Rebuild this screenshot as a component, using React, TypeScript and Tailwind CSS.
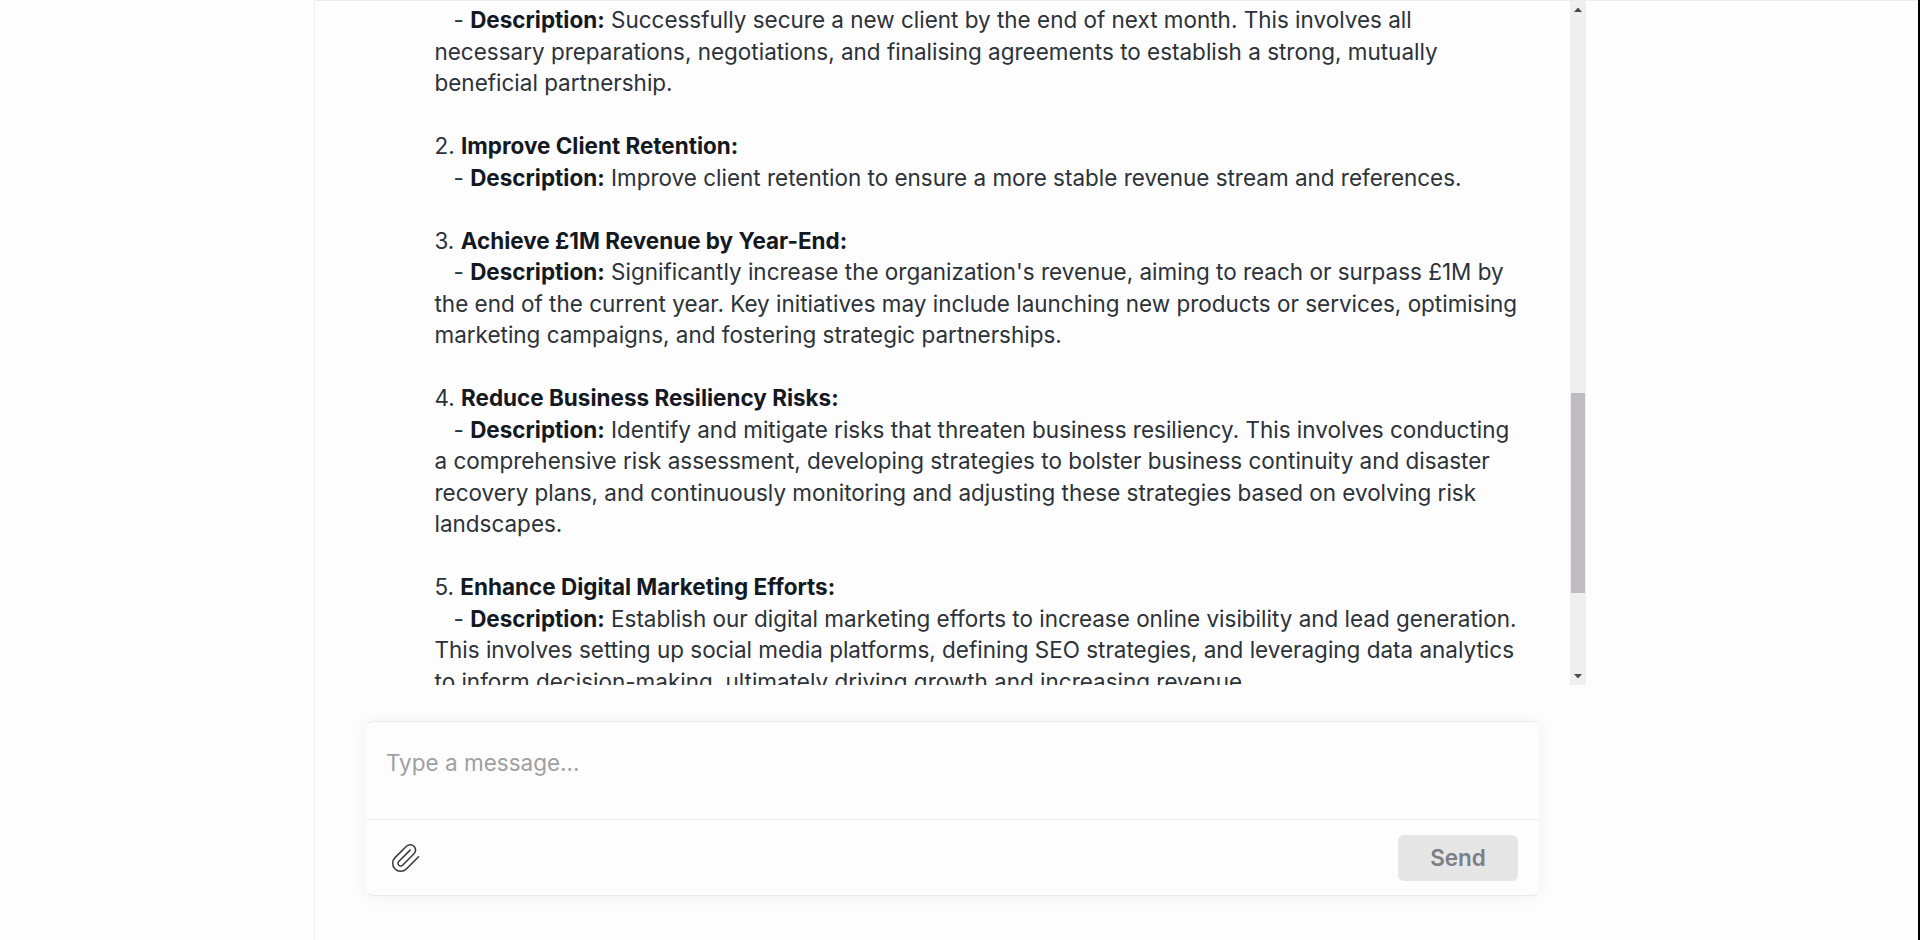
import React from "react";

const messageLines = [
  { lead: "   - ", bold: "Description:", text: " Successfully secure a new client by the end of next month. This involves all" },
  { text: "necessary preparations, negotiations, and finalising agreements to establish a strong, mutually" },
  { text: "beneficial partnership." },
  { text: "" },
  { lead: "2. ", bold: "Improve Client Retention:" },
  { lead: "   - ", bold: "Description:", text: " Improve client retention to ensure a more stable revenue stream and references." },
  { text: "" },
  { lead: "3. ", bold: "Achieve £1M Revenue by Year-End:" },
  { lead: "   - ", bold: "Description:", text: " Significantly increase the organization's revenue, aiming to reach or surpass £1M by" },
  { text: "the end of the current year. Key initiatives may include launching new products or services, optimising" },
  { text: "marketing campaigns, and fostering strategic partnerships." },
  { text: "" },
  { lead: "4. ", bold: "Reduce Business Resiliency Risks:" },
  { lead: "   - ", bold: "Description:", text: " Identify and mitigate risks that threaten business resiliency. This involves conducting" },
  { text: "a comprehensive risk assessment, developing strategies to bolster business continuity and disaster" },
  { text: "recovery plans, and continuously monitoring and adjusting these strategies based on evolving risk" },
  { text: "landscapes." },
  { text: "" },
  { lead: "5. ", bold: "Enhance Digital Marketing Efforts:" },
  { lead: "   - ", bold: "Description:", text: " Establish our digital marketing efforts to increase online visibility and lead generation." },
  { text: "This involves setting up social media platforms, defining SEO strategies, and leveraging data analytics" },
  { text: "to inform decision-making, ultimately driving growth and increasing revenue." },
];

const Scrollbar = () => (
  <div className="w-4 shrink-0 bg-[#efeff0] flex flex-col items-center justify-between pt-[7px] pb-[7px]">
    <svg width="8" height="4" viewBox="0 0 8 4" className="shrink-0">
      <path d="M0 4 L3.5 0 H4.5 L8 4 Z" fill="#4a4a50" />
    </svg>
    <div className="w-3.5 h-[200px] mt-[381px] bg-[#bebcc2]" />
    <svg width="8" height="4" viewBox="0 0 8 4" className="shrink-0 mt-auto">
      <path d="M0 0 L3.5 4 H4.5 L8 0 Z" fill="#4a4a50" />
    </svg>
  </div>
);

const MessageInput = () => (
  <div className="ml-[50px] mt-9 w-[1175px] h-[175px] rounded-lg border border-x-[#f9f9fa] border-y-[#ebebee] bg-[#fdfdfd] shadow-[0_1px_16px_rgba(0,0,0,0.05)] flex flex-col">
    <div className="h-[98px] border-b border-[#f0f0e8] pl-5 pt-[25px]">
      <span className="block text-[22.5px] leading-[32px] text-[#a0a0a2]">Type a message...</span>
    </div>
    <div className="flex-1 flex items-center justify-between pl-6 pr-[21px]">
      <svg
        width="32"
        height="32"
        viewBox="0 0 24 24"
        fill="none"
        stroke="#38383d"
        strokeWidth="1.15"
        strokeLinecap="round"
        strokeLinejoin="round"
      >
        <path d="m21.44 11.05-9.19 9.19a6 6 0 0 1-8.49-8.49l8.57-8.57A4 4 0 1 1 18 8.84l-8.59 8.57a2 2 0 0 1-2.83-2.83l8.49-8.48" />
      </svg>
      <button className="w-[120px] h-[46px] rounded-md bg-[#e6e6e7] text-[22.5px] font-semibold text-[#7c7f86]">
        Send
      </button>
    </div>
  </div>
);

const App = () => {
  return (
    <div className="w-full h-[940px] flex overflow-hidden bg-[#fdfdfe] font-['Inter',sans-serif] border-r-2 border-black">
      <div className="w-[314px] shrink-0" />
      <main className="flex-1 border-l border-t border-[#ededf0]">
        {/* Conversation */}
        <div className="h-[684px] flex overflow-hidden">
          <div className="w-[1255px] pl-[119.5px] pt-[3.25px] overflow-hidden">
            {messageLines.map((line, index) => (
              <p key={index} className="h-[31.5px] leading-[31.5px] text-[22.48px] text-[#2c3238] whitespace-pre">
                {line.lead}
                {line.bold && <strong className="font-bold text-[#14191f]">{line.bold}</strong>}
                {line.text}
              </p>
            ))}
          </div>
          <Scrollbar />
        </div>

        {/* Composer */}
        <MessageInput />
      </main>
    </div>
  );
};

export default App;
